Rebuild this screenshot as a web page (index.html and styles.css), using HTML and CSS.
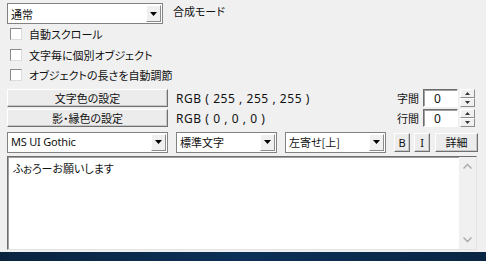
FILE: index.html
```html
<!DOCTYPE html>
<html lang="ja">
<head>
<meta charset="utf-8">
<link rel="stylesheet" href="styles.css">
</head>
<body>
<div class="panel">
  <div class="row r1">
    <div class="combo w156"><span class="val">通常</span><span class="arrow"><svg width="7" height="4" viewBox="0 0 7 4"><path d="M0 0h7L3.5 4z" fill="#000"/></svg></span></div>
    <span class="lbl mode">合成モード</span>
  </div>
  <div class="checks">
    <div class="check"><span class="box"></span><span>自動スクロール</span></div>
    <div class="check"><span class="box"></span><span>文字毎に個別オブジェクト</span></div>
    <div class="check"><span class="box"></span><span>オブジェクトの長さを自動調節</span></div>
  </div>
  <div class="colorrows">
    <div class="row crow">
      <button class="btn wide">文字色の設定</button>
      <span class="rgb">RGB ( 255 , 255 , 255 )</span>
      <span class="lbl sp">字間</span>
      <div class="num">0</div>
      <div class="spin"><span class="up"><svg width="5" height="3" viewBox="0 0 5 3"><path d="M2.5 0L5 3H0z" fill="#333"/></svg></span><span class="dn"><svg width="5" height="3" viewBox="0 0 5 3"><path d="M0 0h5L2.5 3z" fill="#333"/></svg></span></div>
    </div>
    <div class="row crow">
      <button class="btn wide">影・縁色の設定</button>
      <span class="rgb">RGB ( 0 , 0 , 0 )</span>
      <span class="lbl sp">行間</span>
      <div class="num">0</div>
      <div class="spin"><span class="up"><svg width="5" height="3" viewBox="0 0 5 3"><path d="M2.5 0L5 3H0z" fill="#333"/></svg></span><span class="dn"><svg width="5" height="3" viewBox="0 0 5 3"><path d="M0 0h5L2.5 3z" fill="#333"/></svg></span></div>
    </div>
  </div>
  <div class="row frow">
    <div class="combo w161"><span class="val font">MS UI Gothic</span><span class="arrow"><svg width="7" height="4" viewBox="0 0 7 4"><path d="M0 0h7L3.5 4z" fill="#000"/></svg></span></div>
    <div class="combo w101"><span class="val">標準文字</span><span class="arrow"><svg width="7" height="4" viewBox="0 0 7 4"><path d="M0 0h7L3.5 4z" fill="#000"/></svg></span></div>
    <div class="combo w101"><span class="val">左寄せ[上]</span><span class="arrow"><svg width="7" height="4" viewBox="0 0 7 4"><path d="M0 0h7L3.5 4z" fill="#000"/></svg></span></div>
    <button class="btn sq lat b">B</button>
    <button class="btn sq lat">I</button>
    <button class="btn det">詳細</button>
  </div>
  <div class="editor">
    <div class="text">ふぉろーお願いします</div>
    <div class="sbar"><svg width="9" height="6" viewBox="0 0 9 6"><path d="M0.5 5.5L4.5 1.5L8.5 5.5" fill="none" stroke="#a8a8a8" stroke-width="1.4"/></svg><svg width="9" height="6" viewBox="0 0 9 6"><path d="M0.5 0.5L4.5 4.5L8.5 0.5" fill="none" stroke="#a8a8a8" stroke-width="1.4"/></svg></div>
  </div>
</div>
<div class="taskbar"></div>
</body>
</html>
```
FILE: styles.css
```css
* { box-sizing: border-box; }
html, body { margin: 0; padding: 0; }
body {
  width: 486px; height: 261px; overflow: hidden;
  background: #f0f0f0;
  font-family: "Noto Sans CJK JP", "Noto Sans", sans-serif;
  font-feature-settings: "palt";
  font-size: 11px; color: #111;
  display: flex; flex-direction: column;
}
.panel { padding: 3px 0 0 7px; height: 252px; display: flex; flex-direction: column; }
.row { display: flex; align-items: center; }
.lat { font-family: "Noto Sans", "Liberation Sans", sans-serif; }
.combo {
  height: 21px; background: #fff; border: 1px solid #828282;
  display: flex; align-items: center; justify-content: space-between;
  padding-left: 3px;
}
.combo .val { line-height: 18px; }
.combo .font { font-family: "Noto Sans", sans-serif; font-size: 11px; letter-spacing: -0.2px; }
.combo .arrow {
  width: 15px; height: 17px; margin-right: 1px;
  background: #f0f0f0; border: 1px solid; border-color: #fff #8c8c8c #8c8c8c #fff;
  display: flex; align-items: center; justify-content: center;
}
.w156 { width: 156px; }
.w161 { width: 161px; }
.w101 { width: 101px; margin-left: 8px; }
.mode { margin-left: 10px; margin-top: -5px; }
.checks { display: flex; flex-direction: column; margin-top: 0; }
.check { height: 20.5px; display: flex; align-items: center; padding-left: 3px; }
.check .box {
  width: 12px; height: 12px; background: #fff; border: 1px solid #9a9a9a;
  border-color: #8a8a8a #dcdcdc #dcdcdc #8a8a8a; margin-right: 7px;
}
.colorrows { display: flex; flex-direction: column; margin-top: 3px; gap: 1px; }
.crow { height: 19px; }
.btn {
  font: inherit; color: #111; padding: 0; margin: 0;
  background: #ececec; border: 1px solid; border-color: #fff #707070 #707070 #fff;
  box-shadow: inset -1px -1px 0 #c8c8c8;
  height: 18px; display: flex; align-items: center; justify-content: center;
}
.btn.lat { font-family: "Noto Sans", sans-serif; font-size: 11px; }
.wide { width: 161px; }
.rgb { margin-left: 8px; font-size: 12px; font-family: "Noto Sans", "Liberation Sans", sans-serif; letter-spacing: 0.55px; }
.sp { margin-left: auto; margin-right: 4px; }
.num {
  width: 35px; height: 18px; background: #fff; border: 1px solid; border-color: #6d6d6d #fff #fff #6d6d6d;
  box-shadow: inset 1px 1px 0 #a0a0a0;
  display: flex; align-items: center; padding-left: 10px;
  font-family: "Noto Sans", sans-serif; font-size: 12px;
}
.spin { width: 15px; height: 18px; margin-left: 2px; margin-right: 11px; display: flex; flex-direction: column; }
.spin span {
  flex: 1; background: #f0f0f0; border: 1px solid; border-color: #fff #8c8c8c #8c8c8c #fff;
  display: flex; align-items: center; justify-content: center;
}
.frow { margin-top: 4px; height: 21px; }
.sq { width: 16px; height: 19px; margin-left: 4px; }
.sq.b { margin-left: 8px; }
.det { width: 43px; height: 19px; margin-left: 5px; }
.editor {
  margin-top: 3px; width: 470px; height: 94px; background: #fff;
  border: 1px solid; border-color: #6d6d6d #e3e3e3 #e3e3e3 #6d6d6d;
  box-shadow: inset 1px 1px 0 #a0a0a0;
  display: flex;
}
.text { flex: 1; padding: 3px 0 0 5px; line-height: 16px; }
.sbar {
  width: 17px; background: #f0f0f0; display: flex; flex-direction: column; justify-content: space-between;
  align-items: center; padding: 6px 0 6px;
}
.taskbar { height: 9px; background: linear-gradient(90deg, #0a2440, #0c3057 50%, #0a2644); }
```
